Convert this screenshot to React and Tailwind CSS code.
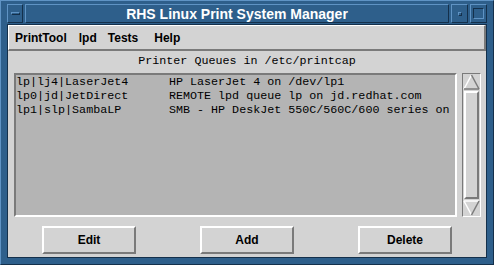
import React from 'react';

const queues = [
  { name: 'lp|lj4|LaserJet4', desc: 'HP LaserJet 4 on /dev/lp1' },
  { name: 'lp0|jd|JetDirect', desc: 'REMOTE lpd queue lp on jd.redhat.com' },
  { name: 'lp1|slp|SambaLP', desc: 'SMB - HP DeskJet 550C/560C/600 series on /dev/lp0' },
];

function TitleButton({ children, className = '' }) {
  return (
    <div
      className={`flex items-center justify-center bg-[#2e5f8b] border border-t-[#5f93c4] border-l-[#5f93c4] border-b-[#14304b] border-r-[#14304b] ${className}`}
    >
      {children}
    </div>
  );
}

function ArrowUp() {
  return (
    <svg width="17" height="16" viewBox="0 0 17 16" className="block">
      <polygon points="8.5,1 1,15 16,15" fill="#d3d3d3" />
      <line x1="8.5" y1="1" x2="1" y2="15" stroke="#ffffff" strokeWidth="1.5" />
      <line x1="8.5" y1="1" x2="16" y2="15" stroke="#7a7a7a" strokeWidth="1.5" />
      <line x1="1" y1="15" x2="16" y2="15" stroke="#7a7a7a" strokeWidth="1.5" />
    </svg>
  );
}

function ArrowDown() {
  return (
    <svg width="17" height="16" viewBox="0 0 17 16" className="block">
      <polygon points="1,1 16,1 8.5,15" fill="#d3d3d3" />
      <line x1="1" y1="1" x2="16" y2="1" stroke="#ffffff" strokeWidth="1.5" />
      <line x1="1" y1="1" x2="8.5" y2="15" stroke="#ffffff" strokeWidth="1.5" />
      <line x1="16" y1="1" x2="8.5" y2="15" stroke="#7a7a7a" strokeWidth="1.5" />
    </svg>
  );
}

function ActionButton({ label }) {
  return (
    <button
      type="button"
      className="w-[94px] h-[28px] bg-[#d3d3d3] border-2 border-t-white border-l-white border-b-[#7a7a7a] border-r-[#7a7a7a] text-[12px] font-bold text-black flex items-center justify-center"
      style={{ fontFamily: '"Liberation Sans", Arial, sans-serif' }}
    >
      {label}
    </button>
  );
}

export default function App() {
  return (
    <div
      className="w-[494px] h-[265px] bg-[#2e5f8b] border border-t-[#5f93c4] border-l-[#5f93c4] border-b-[#14304b] border-r-[#14304b] pt-[3px] px-[6px] pb-[6px] flex flex-col"
      style={{ fontFamily: '"Liberation Sans", Arial, sans-serif' }}
    >
      {/* title bar */}
      <div className="h-[19px] flex gap-[2px]">
        <TitleButton className="w-[16px]">
          <div className="w-[9px] h-[3px] border border-t-[#5f93c4] border-l-[#5f93c4] border-b-[#14304b] border-r-[#14304b]" />
        </TitleButton>
        <TitleButton className="flex-1">
          <span className="text-white font-bold text-[14px] leading-none">RHS Linux Print System Manager</span>
        </TitleButton>
        <TitleButton className="w-[17px]">
          <div className="w-[4px] h-[4px] border border-t-[#5f93c4] border-l-[#5f93c4] border-b-[#14304b] border-r-[#14304b]" />
        </TitleButton>
        <TitleButton className="w-[17px]">
          <div className="w-[11px] h-[11px] border border-t-[#14304b] border-l-[#14304b] border-b-[#5f93c4] border-r-[#5f93c4]" />
        </TitleButton>
      </div>

      {/* client area */}
      <div className="mt-[1px] flex-1 bg-[#d3d3d3] border border-[#14304b] flex flex-col">
        {/* menubar */}
        <div className="h-[26px] border-t border-t-white border-l border-l-white border-b-2 border-b-[#7a7a7a] border-r-2 border-r-[#7a7a7a] flex items-center pl-[6px] text-[12px] font-bold text-black">
          <span>PrintTool</span>
          <span className="ml-[12px]">lpd</span>
          <span className="ml-[11px]">Tests</span>
          <span className="ml-[16px]">Help</span>
        </div>

        <div
          className="h-[21px] flex items-center justify-center text-[11.7px] text-black whitespace-pre"
          style={{ fontFamily: '"Liberation Mono", "Courier New", monospace' }}
        >
          Printer Queues in /etc/printcap
        </div>

        {/* list + scrollbar */}
        <div className="flex gap-[5px] pl-[6px] mt-[1px]">
          <div
            className="w-[443px] h-[144px] bg-[#b4b4b4] border-2 border-t-[#7a7a7a] border-l-[#7a7a7a] border-b-white border-r-white overflow-hidden text-[11.7px] leading-[14px] text-black"
            style={{ fontFamily: '"Liberation Mono", "Courier New", monospace' }}
          >
            {queues.map((q) => (
              <div key={q.name} className="flex whitespace-pre">
                <span className="w-[153px] shrink-0">{q.name}</span>
                <span>{q.desc}</span>
              </div>
            ))}
          </div>

          <div className="w-[19px] h-[144px] border border-t-[#7a7a7a] border-l-[#7a7a7a] border-b-white border-r-white flex flex-col">
            <ArrowUp />
            <div className="flex-1 mx-[1px] my-[1px] border-2 border-t-white border-l-white border-b-[#7a7a7a] border-r-[#7a7a7a]" />
            <ArrowDown />
          </div>
        </div>

        {/* buttons */}
        <div className="flex justify-center gap-[64px] mt-[9px]">
          <ActionButton label="Edit" />
          <ActionButton label="Add" />
          <ActionButton label="Delete" />
        </div>
      </div>
    </div>
  );
}
